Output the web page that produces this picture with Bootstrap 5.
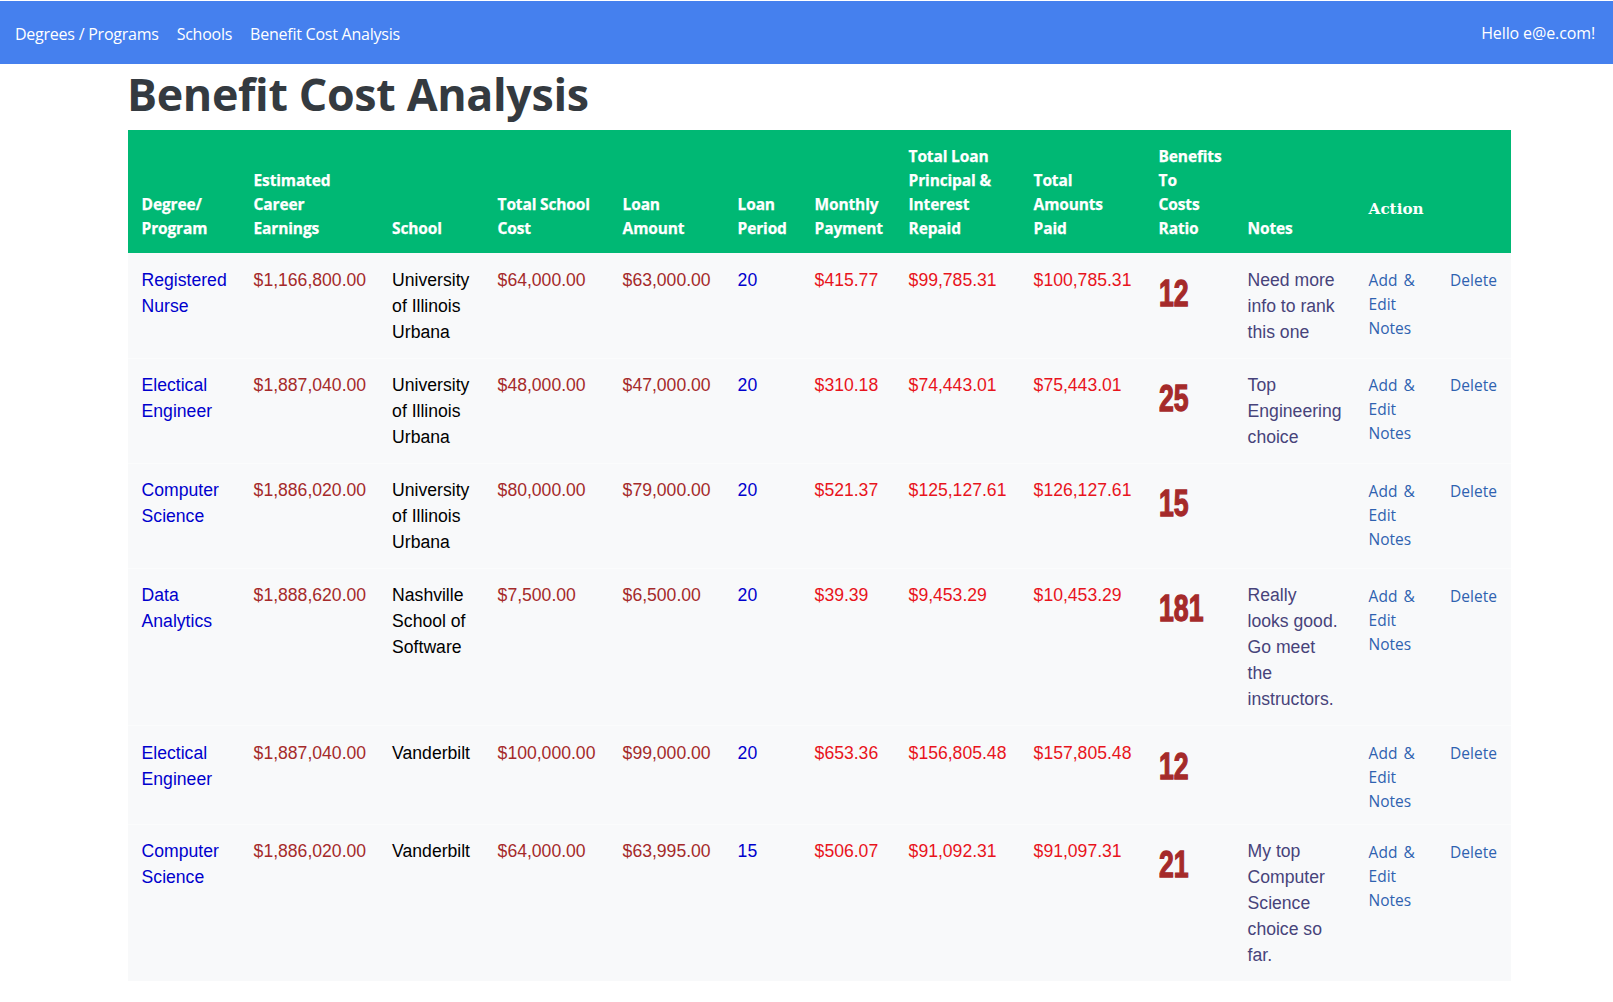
<!DOCTYPE html>
<html lang="en">
<head>
<meta charset="utf-8">
<title>Benefit Cost Analysis</title>
<link href="https://cdn.jsdelivr.net/npm/bootstrap@5.3.0/dist/css/bootstrap.min.css" rel="stylesheet">
<style>
body { font-family: "Open Sans", "Noto Sans", sans-serif; background: #fff; padding-top: 1px; overflow: hidden; }
.topbar { background: #4580ee; height: 63px; padding: 0 15px; font-size: 16px; }
.topbar .nav-link { color: #fff; padding: 2px 0 0; margin-right: 18px; letter-spacing: -.24px; }
.topbar .hello { color: #fff; letter-spacing: -.12px; margin-right: 3px; margin-top: 1px; }
.page-wrap { margin: 0 102px 0 128px; }
.page-title { font-family: "Open Sans", sans-serif; font-weight: 700; font-size: 44.8px; line-height: 56px; margin: 2px 0 8px -1px; color: #343a40; letter-spacing: -.35px; }
.cost-table { table-layout: fixed; width: 1383px; margin: 0; font-family: "Liberation Sans", Arial, sans-serif; font-size: 17.6px; line-height: 26px; }
.cost-table > thead > tr > * { padding: 13.5px 13.6px 13px; }
.cost-table > tbody > tr > * { padding: 14.5px 13.6px 12.65px; }
.cost-table thead th { background: #00b874; color: #fff; border: 0; vertical-align: bottom; font-family: "Open Sans", sans-serif; font-size: 15.5px; font-weight: 700; line-height: 24px; letter-spacing: -.15px; -webkit-text-stroke: .25px #fff; }
.cost-table thead th.act-head { font-family: "DejaVu Serif", "Liberation Serif", serif; font-size: 15.2px; font-weight: 700; padding-bottom: 32px; letter-spacing: 0; -webkit-text-stroke: 0; }
.cost-table tbody td { background: #f8f9fa; border: 0; color: #000; vertical-align: top; box-shadow: none; }
.cost-table tbody tr + tr td { box-shadow: inset 0 1px 0 #fbfcfc; }
.cost-table tbody td.c-prog { color: #0000cd; }
.cost-table tbody td.c-brown { color: #a52a2a; }
.cost-table tbody td.c-red { color: #e8141c; }
.cost-table tbody td.c-ratio { color: #a52a2a; font-family: "Liberation Sans", sans-serif; font-weight: 700; font-size: 37px; line-height: 54px; }
.ratio-num { display: inline-block; transform: scaleX(.72); transform-origin: left center; -webkit-text-stroke: 1.3px #a52a2a; }
.cost-table tbody td.c-notes { color: #47437a; }
.cost-table tbody td.c-act { font-family: "Open Sans", sans-serif; font-size: 15.5px; line-height: 24px; padding-top: 15.8px; padding-bottom: 11px; word-spacing: 2px; }
.cost-table a.act-link { color: #2f62b0; text-decoration: none; }
.w1 { width: 112px; } .w2 { width: 138.5px; } .w3 { width: 105.5px; } .w4 { width: 125px; } .w5 { width: 115px; }
.w6 { width: 77px; } .w7 { width: 94px; } .w8 { width: 125px; } .w9 { width: 125px; } .w10 { width: 89px; }
.w11 { width: 121px; } .w12 { width: 81.5px; } .w13 { width: 74.5px; }
</style>
</head>
<body>
<nav class="topbar d-flex align-items-center justify-content-between">
  <div class="d-flex">
    <a class="nav-link" href="#">Degrees / Programs</a>
    <a class="nav-link" href="#">Schools</a>
    <a class="nav-link" href="#">Benefit Cost Analysis</a>
  </div>
  <div class="hello">Hello e@e.com!</div>
</nav>
<main class="page-wrap">
  <h1 class="page-title">Benefit Cost Analysis</h1>
  <table class="table cost-table">
    <colgroup>
      <col class="w1"><col class="w2"><col class="w3"><col class="w4"><col class="w5"><col class="w6"><col class="w7"><col class="w8"><col class="w9"><col class="w10"><col class="w11"><col class="w12"><col class="w13">
    </colgroup>
    <thead>
      <tr>
        <th>Degree/ Program</th><th>Estimated Career Earnings</th><th>School</th><th>Total School Cost</th><th>Loan Amount</th><th>Loan Period</th><th>Monthly Payment</th><th>Total Loan Principal &amp; Interest Repaid</th><th>Total Amounts Paid</th><th>Benefits<br>To<br>Costs<br>Ratio</th><th>Notes</th><th class="act-head" colspan="2">Action</th>
      </tr>
    </thead>
    <tbody>
      <tr>
        <td class="c-prog">Registered Nurse</td><td class="c-brown">$1,166,800.00</td><td>University of Illinois Urbana</td><td class="c-brown">$64,000.00</td><td class="c-brown">$63,000.00</td><td class="c-prog">20</td><td class="c-red">$415.77</td><td class="c-red">$99,785.31</td><td class="c-red">$100,785.31</td><td class="c-ratio"><span class="ratio-num">12</span></td><td class="c-notes">Need more info to rank this one</td><td class="c-act"><a class="act-link" href="#">Add &amp; Edit Notes</a></td><td class="c-act"><a class="act-link" href="#">Delete</a></td>
      </tr>
      <tr>
        <td class="c-prog">Electical Engineer</td><td class="c-brown">$1,887,040.00</td><td>University of Illinois Urbana</td><td class="c-brown">$48,000.00</td><td class="c-brown">$47,000.00</td><td class="c-prog">20</td><td class="c-red">$310.18</td><td class="c-red">$74,443.01</td><td class="c-red">$75,443.01</td><td class="c-ratio"><span class="ratio-num">25</span></td><td class="c-notes">Top Engineering choice</td><td class="c-act"><a class="act-link" href="#">Add &amp; Edit Notes</a></td><td class="c-act"><a class="act-link" href="#">Delete</a></td>
      </tr>
      <tr>
        <td class="c-prog">Computer Science</td><td class="c-brown">$1,886,020.00</td><td>University of Illinois Urbana</td><td class="c-brown">$80,000.00</td><td class="c-brown">$79,000.00</td><td class="c-prog">20</td><td class="c-red">$521.37</td><td class="c-red">$125,127.61</td><td class="c-red">$126,127.61</td><td class="c-ratio"><span class="ratio-num">15</span></td><td class="c-notes"></td><td class="c-act"><a class="act-link" href="#">Add &amp; Edit Notes</a></td><td class="c-act"><a class="act-link" href="#">Delete</a></td>
      </tr>
      <tr>
        <td class="c-prog">Data Analytics</td><td class="c-brown">$1,888,620.00</td><td>Nashville School of Software</td><td class="c-brown">$7,500.00</td><td class="c-brown">$6,500.00</td><td class="c-prog">20</td><td class="c-red">$39.39</td><td class="c-red">$9,453.29</td><td class="c-red">$10,453.29</td><td class="c-ratio"><span class="ratio-num">181</span></td><td class="c-notes">Really looks good. Go meet the instructors.</td><td class="c-act"><a class="act-link" href="#">Add &amp; Edit Notes</a></td><td class="c-act"><a class="act-link" href="#">Delete</a></td>
      </tr>
      <tr>
        <td class="c-prog">Electical Engineer</td><td class="c-brown">$1,887,040.00</td><td>Vanderbilt</td><td class="c-brown">$100,000.00</td><td class="c-brown">$99,000.00</td><td class="c-prog">20</td><td class="c-red">$653.36</td><td class="c-red">$156,805.48</td><td class="c-red">$157,805.48</td><td class="c-ratio"><span class="ratio-num">12</span></td><td class="c-notes"></td><td class="c-act"><a class="act-link" href="#">Add &amp; Edit Notes</a></td><td class="c-act"><a class="act-link" href="#">Delete</a></td>
      </tr>
      <tr>
        <td class="c-prog">Computer Science</td><td class="c-brown">$1,886,020.00</td><td>Vanderbilt</td><td class="c-brown">$64,000.00</td><td class="c-brown">$63,995.00</td><td class="c-prog">15</td><td class="c-red">$506.07</td><td class="c-red">$91,092.31</td><td class="c-red">$91,097.31</td><td class="c-ratio"><span class="ratio-num">21</span></td><td class="c-notes">My top Computer Science choice so far.</td><td class="c-act"><a class="act-link" href="#">Add &amp; Edit Notes</a></td><td class="c-act"><a class="act-link" href="#">Delete</a></td>
      </tr>
    </tbody>
  </table>
</main>
<script src="https://cdn.jsdelivr.net/npm/bootstrap@5.3.0/dist/js/bootstrap.bundle.min.js"></script>
</body>
</html>
